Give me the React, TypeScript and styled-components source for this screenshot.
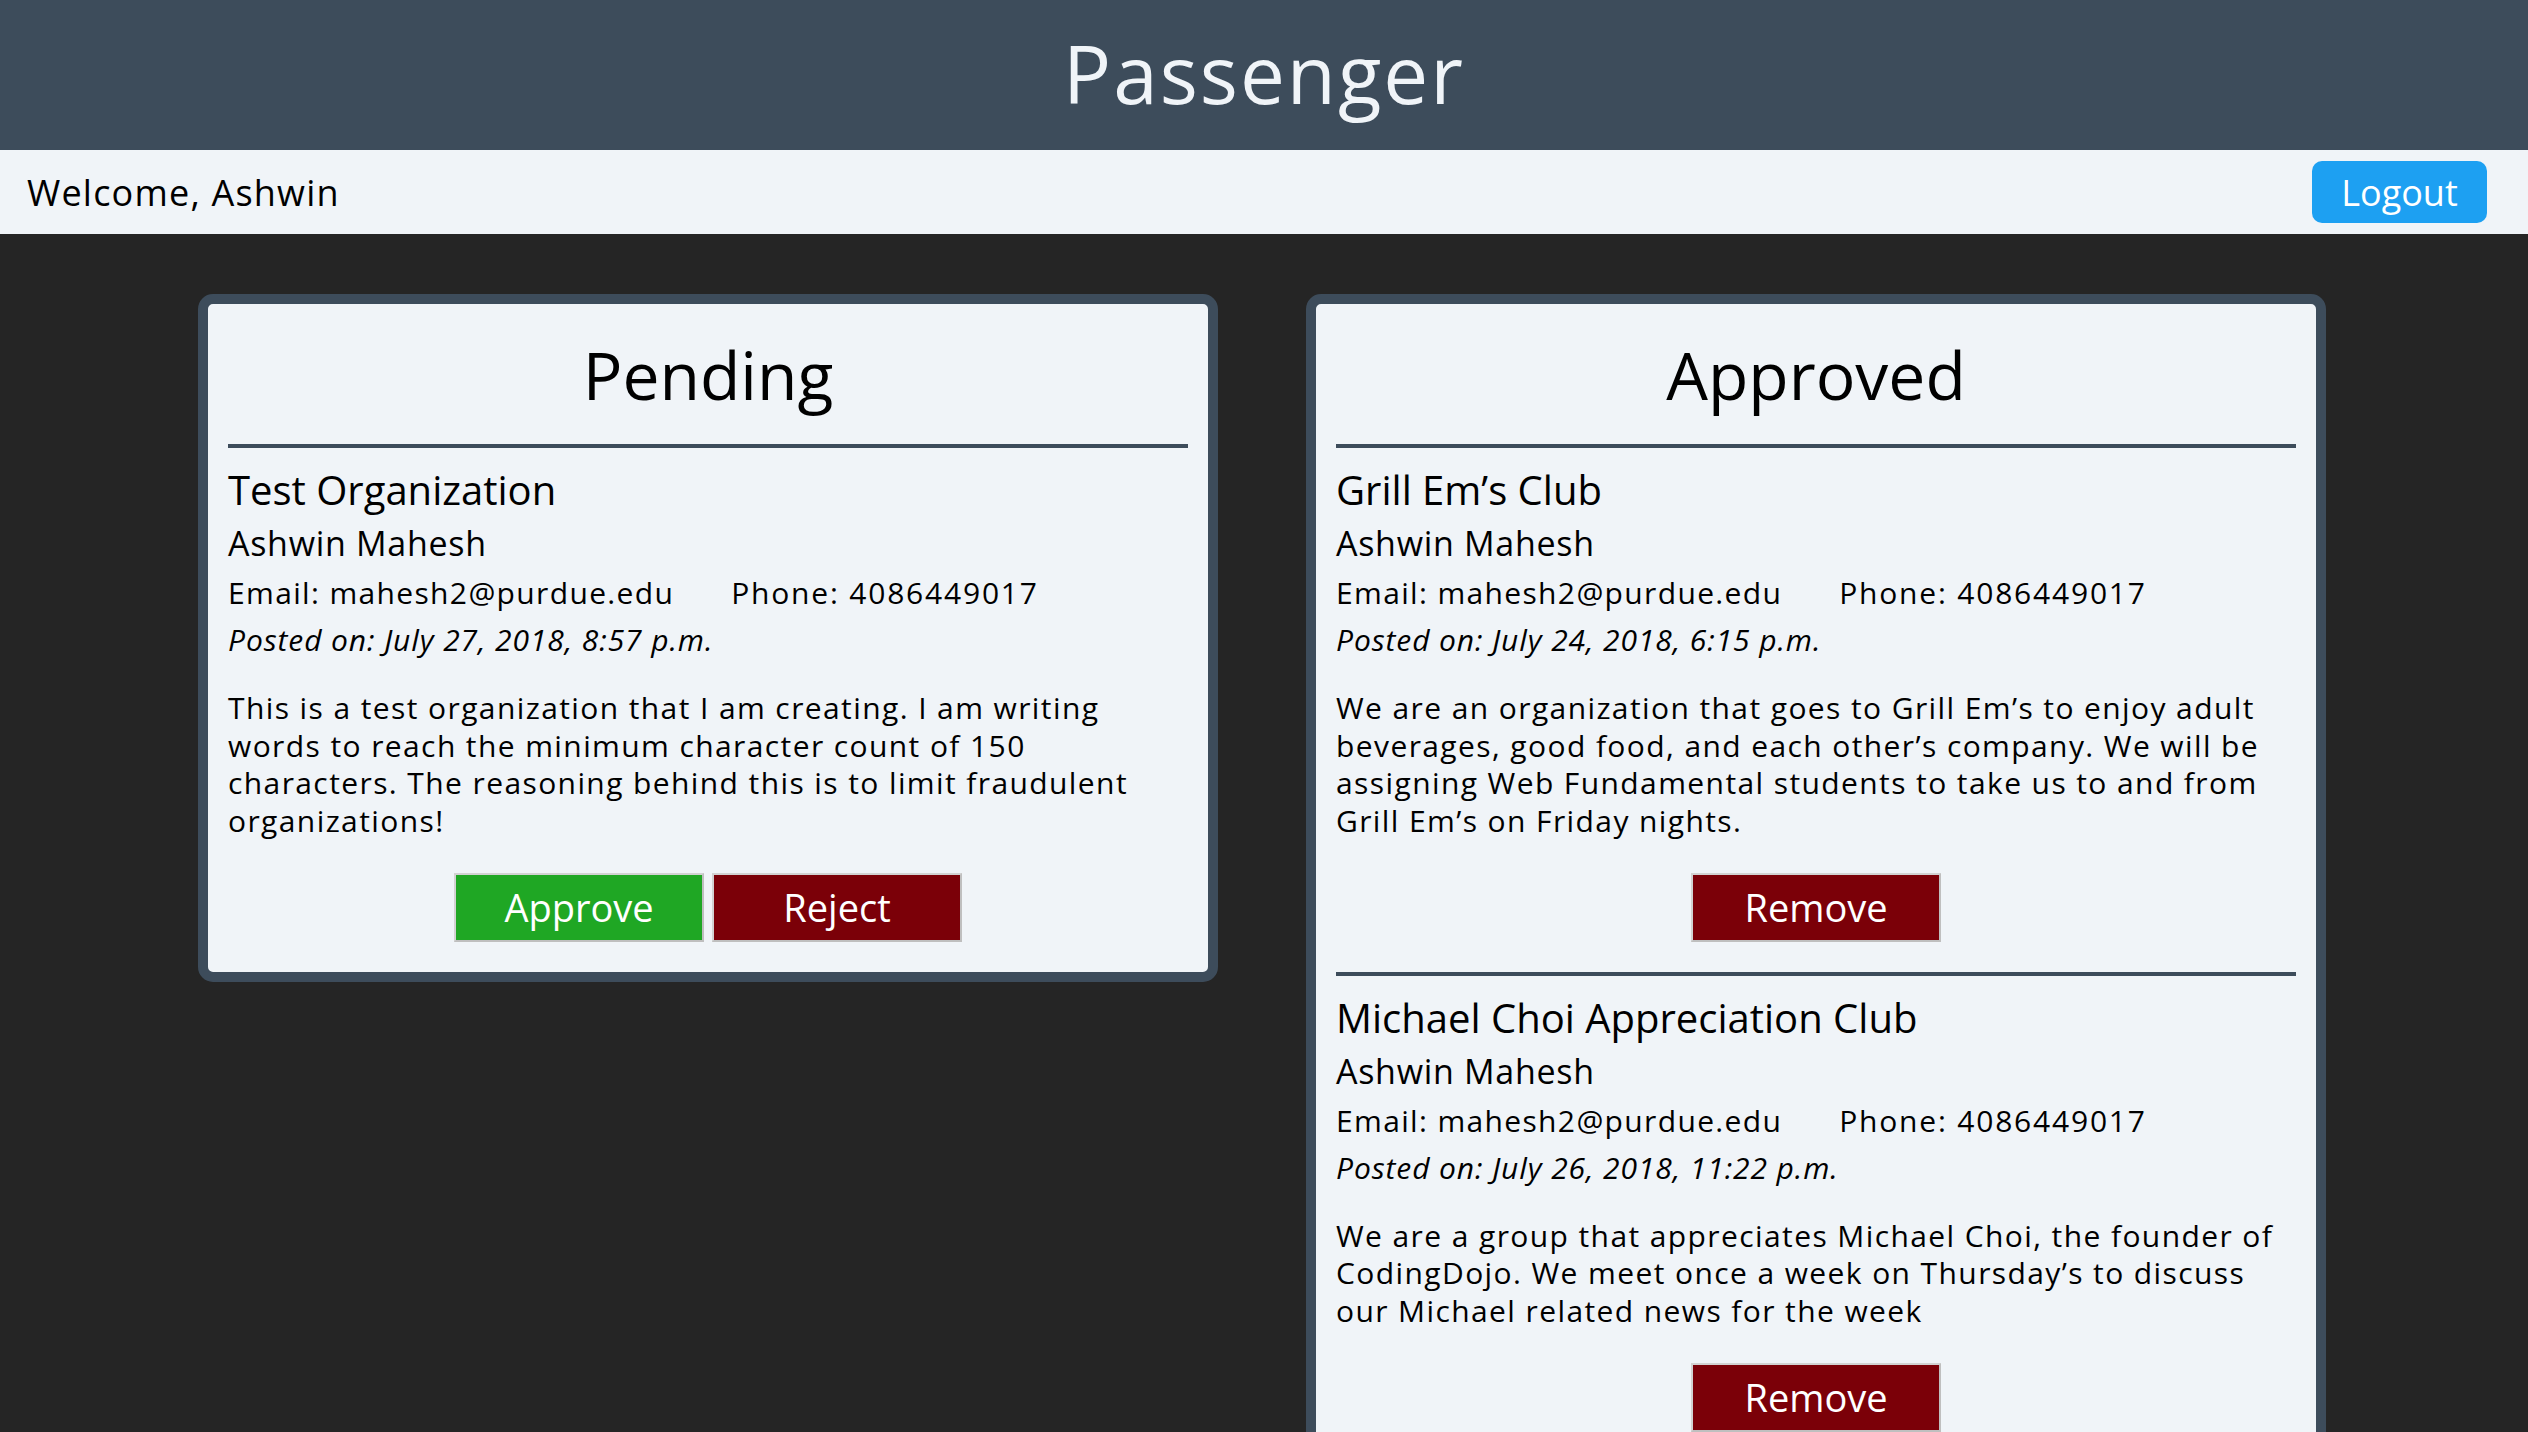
import styled, { createGlobalStyle } from "styled-components";

const COLORS = {
  slate: "#3d4c5b",
  light: "#f0f4f8",
  dark: "#252525",
  blue: "#1da0f2",
  green: "#1fa724",
  red: "#7b0008",
};

const GlobalStyle = createGlobalStyle`
  html, body {
    margin: 0;
    padding: 0;
    background-color: ${COLORS.dark};
    font-family: "Open Sans", Lato, sans-serif;
    color: #000;
  }
  * {
    box-sizing: border-box;
  }
`;

const Header = styled.header`
  height: 150px;
  background-color: ${COLORS.slate};
  display: flex;
  align-items: center;
  justify-content: center;
`;
const Brand = styled.h1`
  margin: 0;
  color: ${COLORS.light};
  font-size: 80px;
  font-weight: 400;
  letter-spacing: 2px;
  line-height: 1;
  padding-bottom: 4px;
`;
const UserBar = styled.div`
  height: 84px;
  background-color: ${COLORS.light};
  display: flex;
  align-items: center;
  justify-content: space-between;
  padding: 0 41px 0 27px;
`;
const Welcome = styled.span`
  font-size: 36px;
  letter-spacing: 1.2px;
`;
const LogoutButton = styled.button`
  width: 175px;
  height: 62px;
  border: none;
  border-radius: 10px;
  background-color: ${COLORS.blue};
  color: #fff;
  font-family: inherit;
  font-size: 36px;
  cursor: pointer;
`;

const Board = styled.main`
  display: flex;
  align-items: flex-start;
  justify-content: center;
  gap: 88px;
  padding: 60px 4px 0 0;
`;
const Panel = styled.section`
  width: 1020px;
  border: 10px solid ${COLORS.slate};
  border-radius: 15px;
  background-color: ${COLORS.light};
  padding: 0 20px;
`;
const PanelTitle = styled.h2`
  margin: 31px 0 30px;
  text-align: center;
  font-size: 66px;
  font-weight: 400;
  line-height: 1.2;
`;
const OrgItem = styled.article`
  border-top: 4px solid ${COLORS.slate};
  padding: 18px 0 30px;
`;
const OrgName = styled.h3`
  margin: 0;
  font-size: 40px;
  font-weight: 400;
  line-height: 1.2;
`;
const Owner = styled.p`
  margin: 9px 0 0;
  font-size: 34px;
  letter-spacing: 0.7px;
  line-height: 1.2;
`;
const Contact = styled.p`
  margin: 11px 0 0;
  font-size: 30px;
  letter-spacing: 1.35px;
  line-height: 1.2;
`;
const Phone = styled.span`
  margin-left: 57px;
  letter-spacing: 1.8px;
`;
const Posted = styled.p`
  margin: 11px 0 0;
  font-size: 30px;
  font-style: italic;
  letter-spacing: 0.9px;
  line-height: 1.2;
`;
const Description = styled.p`
  margin: 31px 0 0;
  font-size: 30px;
  letter-spacing: 1.4px;
  line-height: 37.7px;
  max-width: 948px;
`;
const Actions = styled.div`
  display: flex;
  justify-content: center;
  gap: 8px;
  margin-top: 33px;
`;
const ActionButton = styled.button<{ $tone: "green" | "red" }>`
  width: 250px;
  height: 69px;
  border: 2px solid #d2d2d2;
  border-right-color: #bfbfbf;
  border-bottom-color: #bfbfbf;
  background-color: ${(p) => (p.$tone === "green" ? COLORS.green : COLORS.red)};
  color: #fff;
  font-family: inherit;
  font-size: 38px;
  cursor: pointer;
`;

type Org = {
  name: string;
  owner: string;
  email: string;
  phone: string;
  posted: string;
  description: string;
};

const pending: Org[] = [
  {
    name: "Test Organization",
    owner: "Ashwin Mahesh",
    email: "mahesh2@purdue.edu",
    phone: "4086449017",
    posted: "July 27, 2018, 8:57 p.m.",
    description:
      "This is a test organization that I am creating. I am writing words to reach the minimum character count of 150 characters. The reasoning behind this is to limit fraudulent organizations!",
  },
];

const approved: Org[] = [
  {
    name: "Grill Em\u2019s Club",
    owner: "Ashwin Mahesh",
    email: "mahesh2@purdue.edu",
    phone: "4086449017",
    posted: "July 24, 2018, 6:15 p.m.",
    description:
      "We are an organization that goes to Grill Em\u2019s to enjoy adult beverages, good food, and each other\u2019s company. We will be assigning Web Fundamental students to take us to and from Grill Em\u2019s on Friday nights.",
  },
  {
    name: "Michael Choi Appreciation Club",
    owner: "Ashwin Mahesh",
    email: "mahesh2@purdue.edu",
    phone: "4086449017",
    posted: "July 26, 2018, 11:22 p.m.",
    description:
      "We are a group that appreciates Michael Choi, the founder of CodingDojo. We meet once a week on Thursday\u2019s to discuss our Michael related news for the week",
  },
];

function OrgCard({ org, children }: { org: Org; children: React.ReactNode }) {
  return (
    <OrgItem>
      <OrgName>{org.name}</OrgName>
      <Owner>{org.owner}</Owner>
      <Contact>
        Email: {org.email}
        <Phone>Phone: {org.phone}</Phone>
      </Contact>
      <Posted>Posted on: {org.posted}</Posted>
      <Description>{org.description}</Description>
      <Actions>{children}</Actions>
    </OrgItem>
  );
}

function App(): JSX.Element {
  return (
    <>
      <GlobalStyle />
      <Header>
        <Brand>Passenger</Brand>
      </Header>
      <UserBar>
        <Welcome>Welcome, Ashwin</Welcome>
        <LogoutButton>Logout</LogoutButton>
      </UserBar>
      <Board>
        <Panel>
          <PanelTitle>Pending</PanelTitle>
          {pending.map((org) => (
            <OrgCard key={org.name} org={org}>
              <ActionButton $tone="green">Approve</ActionButton>
              <ActionButton $tone="red">Reject</ActionButton>
            </OrgCard>
          ))}
        </Panel>
        <Panel>
          <PanelTitle>Approved</PanelTitle>
          {approved.map((org) => (
            <OrgCard key={org.name} org={org}>
              <ActionButton $tone="red">Remove</ActionButton>
            </OrgCard>
          ))}
        </Panel>
      </Board>
    </>
  );
}

export default App;
